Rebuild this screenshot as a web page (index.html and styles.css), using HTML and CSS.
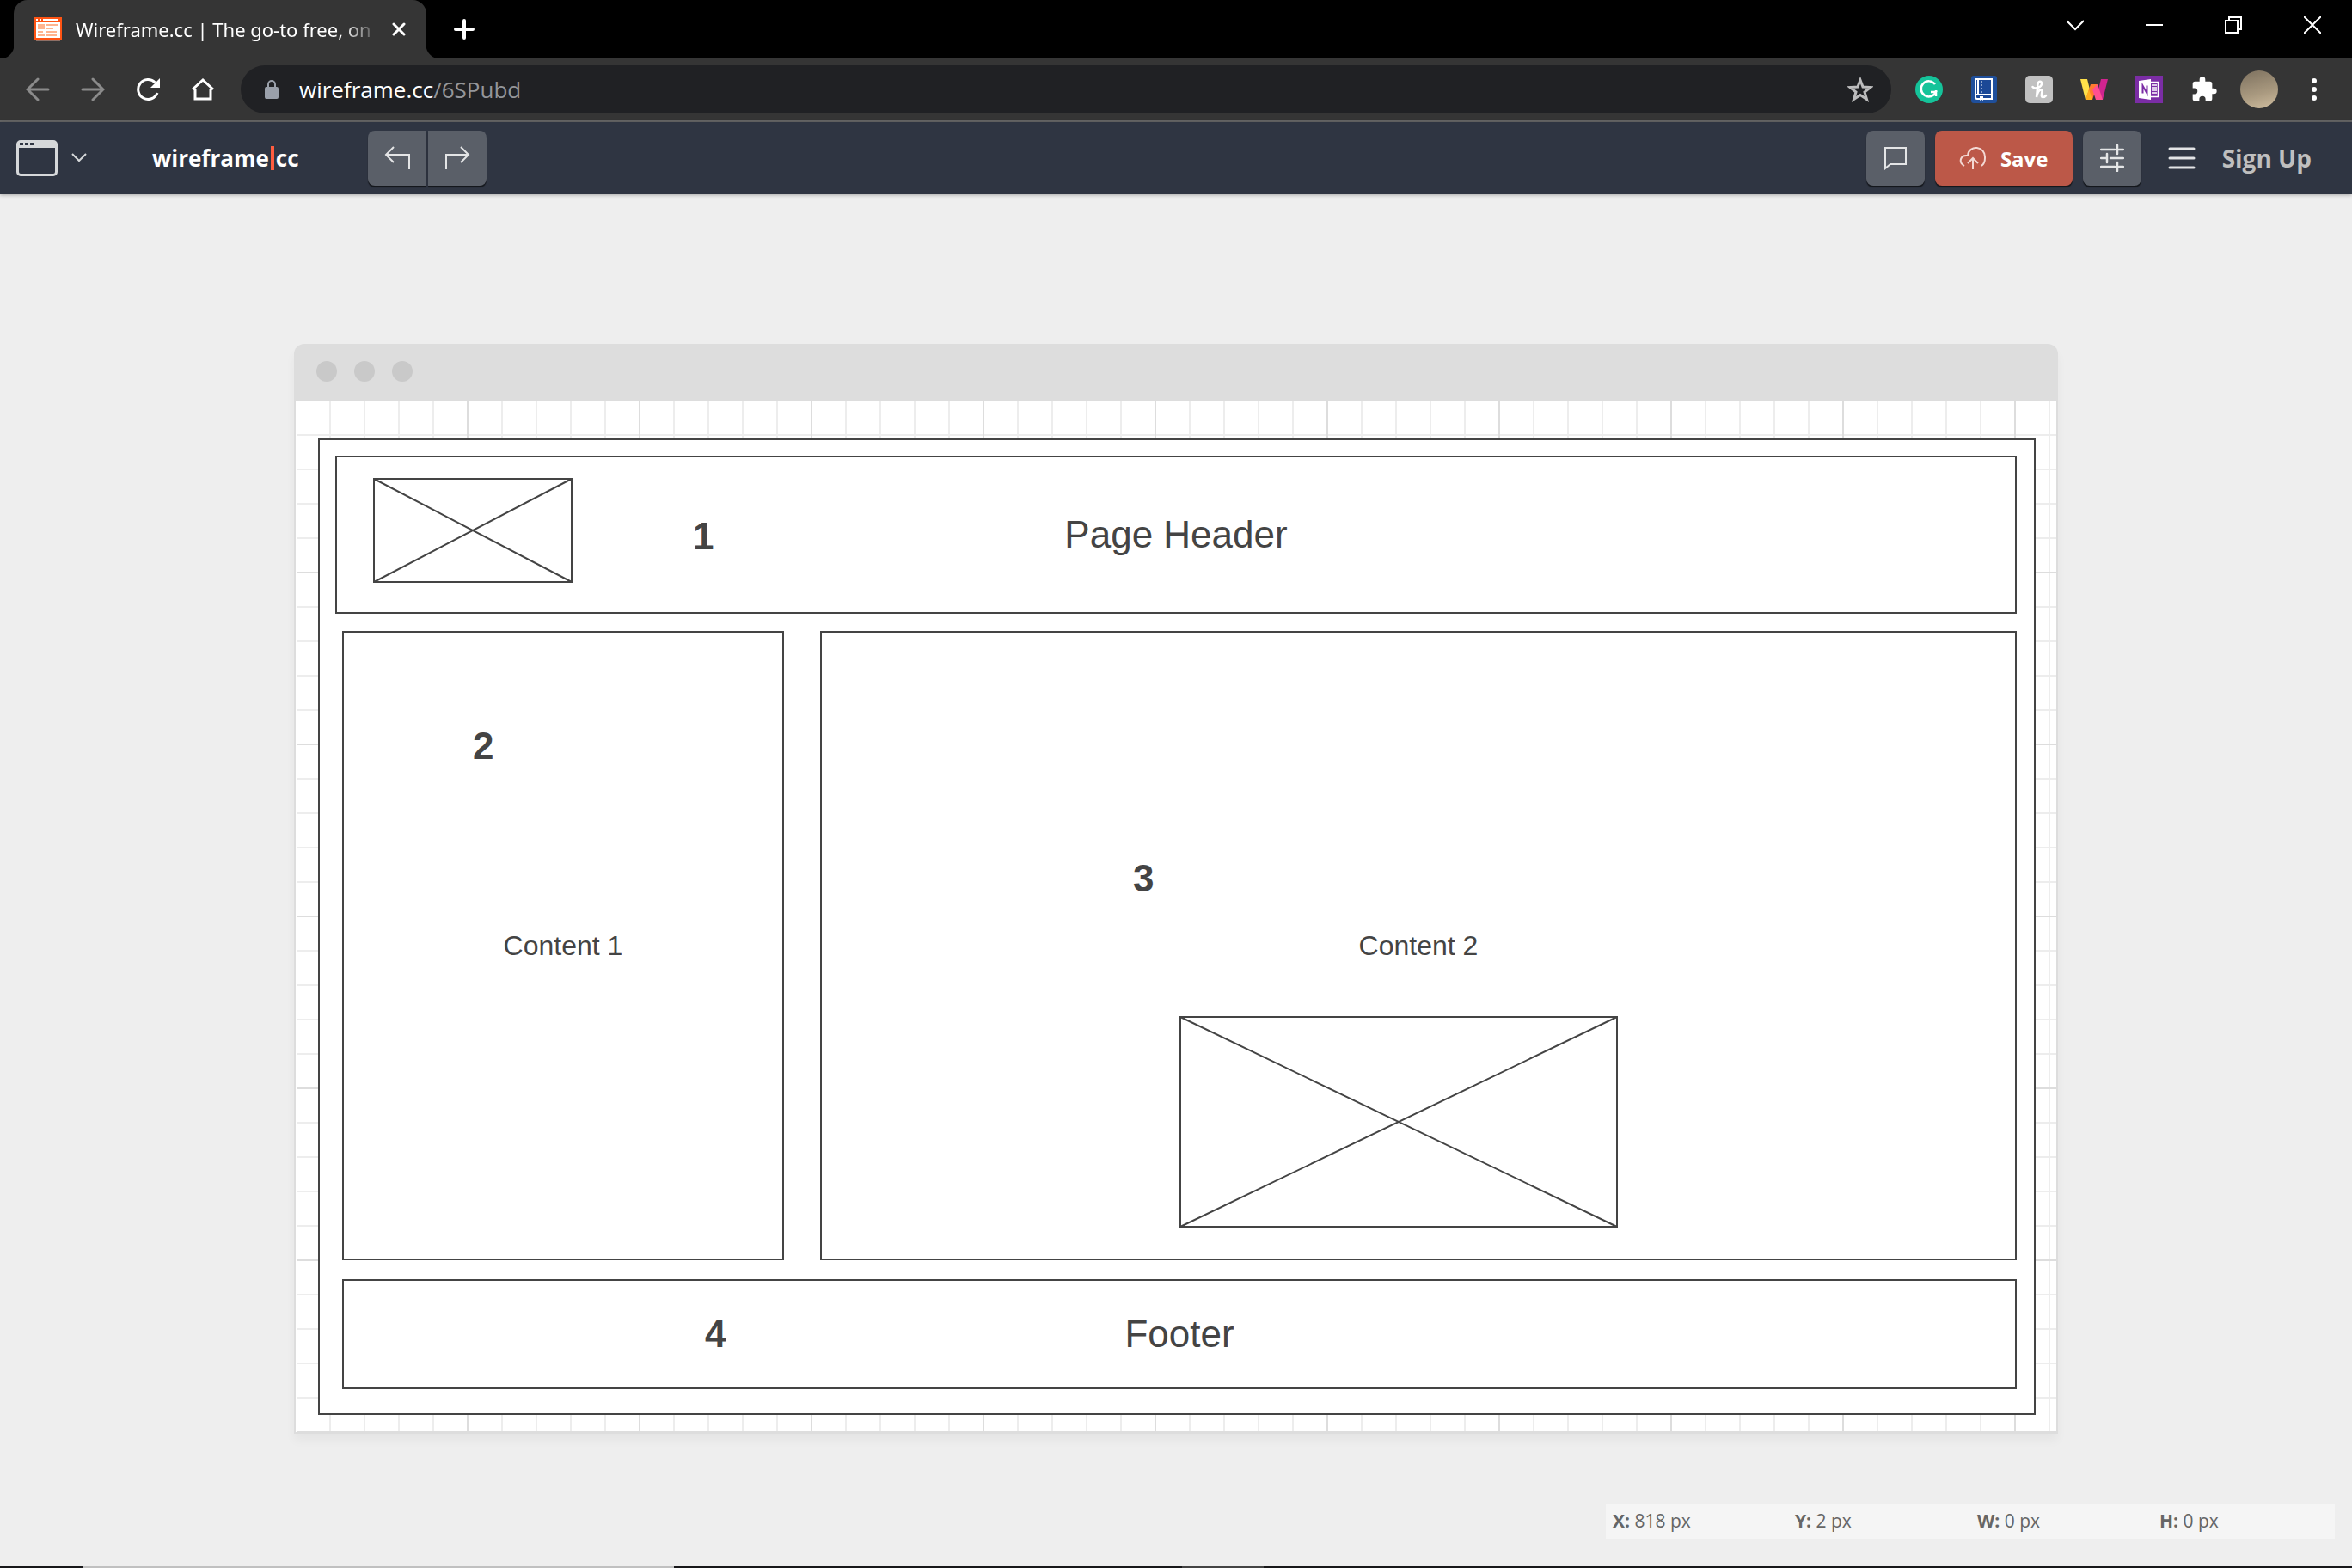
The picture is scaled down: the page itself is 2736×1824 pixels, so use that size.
FILE: index.html
```html
<!DOCTYPE html>
<html lang="en">
<head>
<meta charset="utf-8">
<meta name="viewport" content="width=device-width, initial-scale=1">
<title>Wireframe.cc</title>
<link rel="stylesheet" href="styles.css">
</head>
<body>
<header class="tabstrip">
  <div class="tab">
    <svg class="favicon" width="32" height="28" viewBox="0 0 32 28" aria-hidden="true">
      <path fill="#8d6f66" d="M2 26h28v2H2z"/><path fill="#ff5414" d="M0 0h32v26H0z"/>
      <path fill="#fff" d="M2 2h2v2H2zM6 2h2v2H6zM10 2h18v2H10zM2 6h28v18H2z"/>
      <path fill="#ffb48f" d="M4 8h8v6H4zM14 8h13v2H14zM14 12h8v2h-8zM4 16h6v2H4zM14 16h12v2H14zM4 20h8v2H4zM14 20h12v2H14z"/>
    </svg>
    <span class="tab-title">Wireframe.cc | The go-to free, on</span>
    <button class="icon-button tab-close" aria-label="Close tab">
      <svg width="16" height="16" viewBox="0 0 16 16"><path d="M2 2l12 12M14 2L2 14" stroke-width="3" stroke-linecap="round"/></svg>
    </button>
  </div>
  <button class="icon-button new-tab" aria-label="New tab">
    <svg width="24" height="24" viewBox="0 0 24 24"><path d="M12 2v20M2 12h20" stroke-width="4" stroke-linecap="round"/></svg>
  </button>
  <div class="window-controls">
    <button class="icon-button" aria-label="Search tabs"><svg width="20" height="20" viewBox="0 0 20 20"><path d="M0 5l10 10L20 5" stroke-width="2"/></svg></button>
    <button class="icon-button" aria-label="Minimize"><svg width="20" height="20" viewBox="0 0 20 20"><path d="M0 10h20" stroke-width="2"/></svg></button>
    <button class="icon-button" aria-label="Restore"><svg width="20" height="20" viewBox="0 0 20 20"><path d="M1 5h14v14H1zM5 5V1h14v14h-4" stroke-width="2"/></svg></button>
    <button class="icon-button" aria-label="Close"><svg width="20" height="20" viewBox="0 0 20 20"><path d="M0 0l20 20M20 0L0 20" stroke-width="2"/></svg></button>
  </div>
</header>

<div class="toolbar">
  <nav class="nav-buttons" aria-label="Browser">
    <button class="icon-button dim" aria-label="Back"><svg width="28" height="28" viewBox="0 0 28 28"><path d="M26 14H3M14 2L2 14l12 12" stroke-width="3" stroke-linecap="round"/></svg></button>
    <button class="icon-button dim" aria-label="Forward"><svg width="28" height="28" viewBox="0 0 28 28"><path d="M2 14h23M14 2l12 12-12 12" stroke-width="3" stroke-linecap="round"/></svg></button>
    <button class="icon-button" aria-label="Reload"><svg width="28" height="28" viewBox="0 0 28 28"><path d="M22.500 6A11.500 11.500 0 1 0 25 18" stroke-width="3"/><path d="M28 1v11H17z" fill="#fff" stroke="none"/></svg></button>
    <button class="icon-button" aria-label="Home"><svg width="28" height="28" viewBox="0 0 28 28"><path d="M2 14L14 3l12 11M5 13v12h18V13" stroke-width="3"/></svg></button>
  </nav>
  <div class="omnibox">
    <svg width="16" height="22" viewBox="0 0 16 22" aria-hidden="true"><rect y="8" width="16" height="14" rx="2" fill="#9aa0aa" stroke="none"/><path d="M4 9V5a4 4 0 0 1 8 0v4" fill="none" stroke="#9aa0aa" stroke-width="2"/></svg>
    <div class="address">
      <label for="path">wireframe.cc</label><input id="path" type="text" value="/6SPubd">
    </div>
    <button class="icon-button" aria-label="Bookmark"><svg width="30" height="30" viewBox="0 0 30 30"><path d="M15 4l3 8 9 .5-7 5.500 2.500 8.500-7.500-5-7.500 5L10 18l-7-5.500 9-.5z" stroke="#bcbcbd" stroke-width="3"/></svg></button>
  </div>
  <div class="extensions">
    <button class="icon-button" aria-label="Grammar checker"><svg width="32" height="32" viewBox="0 0 32 32"><circle cx="16" cy="16" r="16" fill="#15c39a" stroke="none"/><path d="M23 10a9 9 0 1 0 1 9h-6M24 17v7" stroke-width="2.500"/></svg></button>
    <button class="icon-button" aria-label="Dictionary"><svg width="32" height="32" viewBox="0 0 32 32"><rect x="1" width="30" height="32" rx="3" fill="#1f4f9b" stroke="none"/><path d="M8 4h17v23H8a2 2 0 0 1-2-2V4z" fill="#1b4896" stroke-width="2"/><path d="M7 22h18M9 4v18" stroke-width="2"/><path d="M13 6v14" stroke-width="1" stroke-dasharray="2 2"/><path d="M11 24v5l2-1.500 2 1.500v-5z" fill="#fff" stroke="none"/></svg></button>
    <button class="icon-button" aria-label="Coupons"><svg width="32" height="32" viewBox="0 0 32 32"><rect width="32" height="32" rx="5" fill="#c0c0c0" stroke="none"/><path d="M8.500 13c2 3 10.500 1 10.500-4 0-3.500-4-3-4.500 1L13 25c1-5 3-9 5.500-8.500S17 25 20 25s3-1 4-2" stroke-width="2.500" stroke-linecap="round"/></svg></button>
    <button class="icon-button" aria-label="Web highlighter"><svg width="32" height="32" viewBox="0 0 32 32"><g stroke="none"><path fill="#ffe14a" d="M0 4h8l6 24H6z"/><path fill="#d0248f" d="M24 4h8l-6 24h-8z"/><path fill="#ff7a2f" d="M12 10h8l-6 18H6z"/><path fill="#ffb01f" d="M10 16l4 12H6z"/><path fill="#ff4f91" d="M20 10l6 18h-8l-4-12z"/></g></svg></button>
    <button class="icon-button" aria-label="Web clipper"><svg width="32" height="32" viewBox="0 0 32 32"><path fill="#7b2da5" stroke="none" d="M0 0h32v32H0z"/><path d="M18 7.500h8.500v17H18M19 11h6M19 14h6M19 17h6M19 20h6" stroke-width="1.500"/><path fill="#fff" stroke="none" d="M4 6l14-2v24L4 26z"/><path d="M8.500 20.500v-9l5 9v-9" stroke="#7b2da5" stroke-width="2"/></svg></button>
    <button class="icon-button" aria-label="Extensions"><svg width="32" height="32" viewBox="0 0 24 24"><path fill="#fff" stroke="none" d="M20.500 11H19V7a2 2 0 0 0-2-2h-4V3.500a2.500 2.500 0 0 0-5 0V5H4a2 2 0 0 0-2 2v3.800h1.500a2.700 2.700 0 0 1 0 5.400H2V20a2 2 0 0 0 2 2h3.800v-1.500a2.700 2.700 0 0 1 5.400 0V22H17a2 2 0 0 0 2-2v-4h1.500a2.500 2.500 0 0 0 0-5z"/></svg></button>
    <button class="icon-button" aria-label="Profile"><span class="avatar"></span></button>
    <button class="icon-button" aria-label="Menu"><svg width="8" height="28" viewBox="0 0 8 28"><g fill="#fff" stroke="none"><circle cx="4" cy="4" r="3"/><circle cx="4" cy="14" r="3"/><circle cx="4" cy="24" r="3"/></g></svg></button>
  </div>
</div>

<div class="appbar">
  <button class="icon-button device" aria-label="Device template">
    <svg width="48" height="42" viewBox="0 0 48 42"><rect x="1.500" y="1.500" width="45" height="39" rx="3.500" stroke="#d6d8da" stroke-width="3"/><path fill="#d6d8da" stroke="none" d="M2 2h44v7H2z"/><path fill="#2f3542" stroke="none" d="M4 3h4v3H4zM10 3h4v3h-4zM16 3h4v3h-4z"/></svg>
    <svg width="18" height="12" viewBox="0 0 18 12"><path d="M1 1l8 8 8-8" stroke="#d6d8da" stroke-width="2"/></svg>
  </button>
  <a class="logo" href="#">wireframe<span class="logo-bar"></span>cc</a>
  <div class="history">
    <button class="tool" aria-label="Undo"><svg width="30" height="30" viewBox="0 0 30 30"><path d="M29 28V11H2M11 2L2 11l9 9" stroke-width="2"/></svg></button>
    <button class="tool" aria-label="Redo"><svg width="30" height="30" viewBox="0 0 30 30"><path d="M2 28V11h26M19 2l9 9-9 9" stroke-width="2"/></svg></button>
  </div>
  <div class="actions">
    <button class="tool" aria-label="Comments"><svg width="28" height="28" viewBox="0 0 28 28"><path d="M2 2h24v19H8l-6 5z" stroke-width="2"/></svg></button>
    <button class="tool save"><svg width="32" height="28" viewBox="0 0 32 28"><path d="M6 23C-1 19 1 10 10 11C11 -2 31 -1 30 14Q30 20 26 23M16 27V14M10 20l6-6 6 6" stroke-width="2"/></svg>Save</button>
    <button class="tool" aria-label="Settings"><svg width="28" height="32" viewBox="0 0 28 32"><path d="M1 6h16M20 1v10M22 6h5M1 16h6M8 11v10M12 16h15M1 26h16M20 21v10M22 26h5" stroke-width="2.500" stroke-linecap="round"/></svg></button>
    <button class="icon-button menu" aria-label="Menu"><svg width="32" height="26" viewBox="0 0 32 26"><path d="M2 2h28M2 13h28M2 24h28" stroke="#e3e4e6" stroke-width="3" stroke-linecap="round"/></svg></button>
    <a class="signup" href="#">Sign Up</a>
  </div>
</div>

<main class="stage">
  <section class="mock-window">
    <div class="mock-titlebar"><span></span><span></span><span></span></div>
    <div class="grid-canvas">
      <div class="box page">
        <div class="box page-header">
          <svg class="placeholder logo-image" viewBox="0 0 232 122" preserveAspectRatio="none" aria-hidden="true"><path d="M1 1h230v120H1zM1 1l230 120M231 1L1 121"/></svg>
          <b class="marker m1">1</b>
          <span class="large">Page Header</span>
        </div>
        <div class="columns">
          <div class="box content-one"><b class="marker m2">2</b>Content 1</div>
          <div class="box content-two">
            <b class="marker m3">3</b>Content 2
            <svg class="placeholder content-image" viewBox="0 0 510 246" preserveAspectRatio="none" aria-hidden="true"><path d="M1 1h508v244H1zM1 1l508 244M509 1L1 245"/></svg>
          </div>
        </div>
        <div class="box page-footer"><b class="marker m4">4</b><span class="large">Footer</span></div>
      </div>
    </div>
  </section>
  <dl class="status">
    <div><dt>X:</dt> <dd>818 px</dd></div>
    <div><dt>Y:</dt> <dd>2 px</dd></div>
    <div><dt>W:</dt> <dd>0 px</dd></div>
    <div><dt>H:</dt> <dd>0 px</dd></div>
  </dl>
</main>
<div class="taskbar-edge"></div>
</body>
</html>
```
FILE: styles.css
```css
* { box-sizing: border-box; }

body {
  margin: 0;
  min-height: 100vh;
  display: flex;
  flex-direction: column;
  background: #eee;
  font-family: "Open Sans", "Noto Sans", sans-serif;
  font-size: 24px;
  color: #444;
}

button { font: inherit; border: 0; padding: 0; margin: 0; color: inherit; background: none; }
a { color: inherit; text-decoration: none; }
svg { display: block; flex: none; fill: none; stroke: #fff; }

.icon-button { display: flex; align-items: center; justify-content: center; flex: none; }

/* Browser tab strip */
.tabstrip { display: flex; height: 68px; padding-left: 16px; background: #000; color: #fff; }
.tab {
  position: relative;
  display: flex;
  align-items: center;
  width: 480px;
  padding: 0 24px;
  border-radius: 16px 16px 0 0;
  background: #353535;
}
.tab::before, .tab::after {
  content: "";
  position: absolute;
  bottom: 0;
  width: 16px;
  height: 16px;
}
.tab::before { right: 100%; background: radial-gradient(circle at 0 0, #000 16px, #353535 17px); }
.tab::after { left: 100%; background: radial-gradient(circle at 100% 0, #000 16px, #353535 17px); }
.tab-title {
  flex: 1;
  margin: 0 14px 0 16px;
  overflow: hidden;
  white-space: nowrap;
  font-family: "Noto Sans", "Open Sans", sans-serif;
  font-size: 22px;
  line-height: 32px;
  -webkit-mask-image: linear-gradient(to right, #000 310px, transparent 354px);
  mask-image: linear-gradient(to right, #000 310px, transparent 354px);
}
.favicon { stroke: none; }
.new-tab { width: 88px; }
.window-controls { display: flex; margin-left: auto; height: 58px; }
.window-controls .icon-button { width: 92px; }

/* Browser toolbar */
.toolbar {
  display: flex;
  align-items: center;
  height: 74px;
  padding: 0 12px;
  background: #353535;
  border-bottom: 2px solid #666;
}
.nav-buttons, .extensions { display: flex; flex: none; }
.nav-buttons .icon-button, .extensions .icon-button { width: 64px; height: 56px; }
.nav-buttons { margin-right: 12px; }
.dim svg { stroke: #8b8b8b; }
.omnibox {
  flex: 1;
  display: flex;
  align-items: center;
  height: 56px;
  margin-right: 12px;
  padding: 0 21px 0 28px;
  border-radius: 28px;
  background: #202124;
}
.address { flex: 1; display: flex; margin-left: 24px; font-size: 26px; line-height: 36px; color: #fff; }
.address input {
  flex: 1;
  min-width: 0;
  padding: 0;
  border: 0;
  outline: 0;
  background: none;
  font: inherit;
  color: #94969a;
}
.avatar { width: 44px; height: 44px; border-radius: 50%; background: linear-gradient(165deg, #7d715f, #aa9a80 60%, #d0bea0); }

/* Application bar */
.appbar {
  position: relative;
  display: flex;
  align-items: center;
  height: 84px;
  padding: 0 47px 0 19px;
  background: #2f3542;
  box-shadow: 0 1px 4px rgba(0, 0, 0, .3);
}
.device { gap: 16px; width: 158px; justify-content: flex-start; }
.logo { display: flex; align-items: center; width: 251px; font-weight: 700; font-size: 26px; color: #fff; }
.logo-bar { width: 4px; height: 28px; margin: 0 2px; background: #ff5d40; }
.history { display: flex; gap: 2px; }
.tool {
  display: flex;
  align-items: center;
  justify-content: center;
  width: 68px;
  height: 64px;
  border-radius: 8px;
  background: #5a5f68;
  box-shadow: 0 2px 1px #14171c;
}
.tool svg { stroke: #e4e5e6; }
.history .tool:first-child { border-radius: 8px 0 0 8px; }
.history .tool:last-child { border-radius: 0 8px 8px 0; }
.actions { display: flex; align-items: center; gap: 12px; margin-left: auto; }
.save { width: 160px; gap: 16px; background: #bc5848; color: #fff; font-weight: 700; }
.save svg { stroke: #f3d9d4; }
.menu { width: 70px; }
.signup { font-weight: 700; font-size: 28px; color: #bfbfbf; }

/* Drawing stage */
.stage { flex: 1; display: flex; flex-direction: column; padding: 174px 20px 32px; }
.mock-window { margin: 0 322px; border-radius: 12px 12px 0 0; box-shadow: 0 8px 12px rgba(0, 0, 0, .04); }
.mock-titlebar {
  display: flex;
  gap: 20px;
  height: 66px;
  padding: 20px 26px;
  border-radius: 12px 12px 0 0;
  background: #ddd;
}
.mock-titlebar span { width: 24px; height: 24px; border-radius: 50%; background: #c9c9c9; }
.grid-canvas {
  padding: 44px 24px 20px 26px;
  border: 2px solid #ddd;
  border-top: 0;
  background-color: #fff;
  background-image:
    repeating-linear-gradient(to right, transparent 0 198px, #ddd 198px 200px),
    repeating-linear-gradient(to bottom, transparent 0 198px, #ddd 198px 200px),
    repeating-linear-gradient(to right, transparent 0 38px, #ededed 38px 40px),
    repeating-linear-gradient(to bottom, transparent 0 38px, #ededed 38px 40px);
  background-position: 1px 1px;
  background-repeat: no-repeat;
  font-family: "Liberation Sans", Arial, sans-serif;
}

.box { border: 2px solid #444; background: #fff; }
.page { padding: 18px 20px 28px 18px; }
.page-header, .content-one, .content-two, .page-footer {
  position: relative;
  display: flex;
  align-items: center;
  justify-content: center;
  font-size: 32px;
}
.page-header { height: 184px; }
.columns {
  display: grid;
  grid-template-columns: 514fr 1392fr;
  gap: 42px;
  height: 732px;
  margin: 20px 0 22px 8px;
}
.page-footer { height: 128px; margin-left: 8px; }
.large { font-size: 44px; }

/* Numbered notes and image placeholders lie freely over the boxes */
.marker { position: absolute; font-size: 44px; line-height: 48px; }
.m1 { left: 414px; top: 68px; }
.m2 { left: 150px; top: 108px; }
.m3 { left: 362px; top: 262px; }
.m4 { left: 420px; top: 38px; }
.placeholder { position: absolute; stroke: #444; stroke-width: 2; }
.logo-image { left: 42px; top: 24px; width: 232px; height: 122px; }
.content-image { left: 416px; top: 446px; width: 510px; height: 246px; }

/* Cursor read-out */
.status {
  align-self: flex-end;
  display: grid;
  grid-template-columns: repeat(4, 212px);
  margin: auto 0 0;
  background: #f5f5f5;
  font-size: 21px;
  line-height: 41px;
  color: #666;
}
.status div { padding-left: 8px; }
.status dt, .status dd { display: inline; margin: 0; }
.status dt { font-weight: 700; }

.taskbar-edge {
  height: 2px;
  background: linear-gradient(to right, #18181a 96px, #c0c0c0 96px 784px, #18181a 784px 1375px, #444 1375px 1470px, #18181a 1470px);
}
```
